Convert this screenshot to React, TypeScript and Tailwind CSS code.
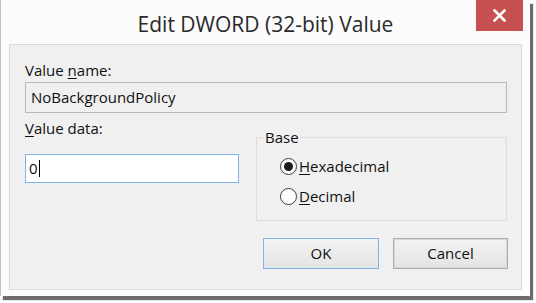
import React from 'react';

const font = { fontFamily: '"Open Sans", "Noto Sans", Arial, sans-serif' };

const Radio = ({ label, accel, checked }: { label: string; accel: string; checked?: boolean }) => (
  <div className="flex items-center h-[20px]">
    <span className="ml-[23px] w-[17px] h-[17px] rounded-full border border-[#3a3a3a] bg-white flex items-center justify-center">
      {checked && <span className="w-[9px] h-[9px] rounded-full bg-[#1a1a1a]" />}
    </span>
    <span className="ml-[2px] text-[15px] leading-[20px] text-[#111]">
      <span className="underline underline-offset-2">{accel}</span>
      {label}
    </span>
  </div>
);

const Button = ({ children, primary }: { children: React.ReactNode; primary?: boolean }) => (
  <button
    className={`h-[31px] rounded-none text-[15px] text-[#111] bg-gradient-to-b from-[#f2f2f2] to-[#e4e4e4] border ${
      primary ? 'w-[116px] border-[#7eb4ea]' : 'w-[115px] border-[#acacac] shadow-[inset_0_0_0_1px_#d9d9d9]'
    }`}
  >
    {children}
  </button>
);

export default function App() {
  return (
    <div className="w-[536px] h-[303px] bg-white overflow-hidden" style={font}>
      <div className="w-[530px] h-[296px] bg-[#fcfcfc] border-l border-[#c3c3c3] shadow-[3px_4px_1px_rgba(60,60,60,0.75)] flex flex-col">
        {/* Title bar */}
        <div className="h-[44px] grid grid-cols-[1fr_auto_1fr] items-start">
          <div />
          <div className="mt-[10px] text-[21px] leading-[28px] text-[#2a2a2a]">Edit DWORD (32-bit) Value</div>
          <div className="flex justify-end pr-[7px]">
            <button className="w-[47px] h-[31px] bg-[#c75050] flex items-center justify-center" aria-label="Close">
              <svg width="13" height="13" viewBox="0 0 13 13">
                <path d="M1.5 1.5 L11.5 11.5 M11.5 1.5 L1.5 11.5" stroke="white" strokeWidth="2.6" strokeLinecap="square" />
              </svg>
            </button>
          </div>
        </div>

        {/* Client area */}
        <div className="ml-[8px] w-[513px] h-[246px] bg-[#f0f0f0] border border-[#dadada] pl-[15px] flex flex-col">
          <div className="mt-[15px] h-[20px] text-[15px] leading-[20px] text-[#111]">
            Value <span className="underline underline-offset-2">n</span>ame:
          </div>
          <div className="mt-[2px] w-[482px] h-[31px] border border-[#b9b9b9] bg-[#f0f0f0] flex items-center pl-[5px] text-[15px] text-[#111]">
            NoBackgroundPolicy
          </div>

          <div className="flex">
            <div className="w-[214px] flex flex-col">
              <div className="mt-[5px] h-[20px] text-[15px] leading-[20px] text-[#111]">
                <span className="underline underline-offset-2">V</span>alue data:
              </div>
              <div className="mt-[16px] h-[29px] border border-[#7eb4ea] bg-white flex items-center pl-[3px] text-[15px] text-[#111]">
                0<span className="ml-[1px] w-[1px] h-[17px] bg-black" />
              </div>
            </div>

            <div className="ml-[17px] mt-[14px] w-[251px] flex flex-col">
              <div className="flex items-center h-[20px]">
                <div className="w-[8px] h-[2px] border-t border-[#dcdcdc] mt-[1px]" />
                <span className="px-[1px] text-[15px] leading-[20px] text-[#111]">Base</span>
                <div className="flex-1 h-[2px] border-t border-[#dcdcdc] mt-[1px]" />
              </div>
              <div className="-mt-[9px] h-[83px] border border-t-0 border-[#dcdcdc] flex flex-col pt-[18px] gap-[10px]">
                <Radio accel="H" label="exadecimal" checked />
                <Radio accel="D" label="ecimal" />
              </div>
            </div>
          </div>

          <div className="mt-[17px] flex justify-end gap-[14px] pr-[13px]">
            <Button primary>OK</Button>
            <Button>Cancel</Button>
          </div>
        </div>
      </div>
    </div>
  );
}
